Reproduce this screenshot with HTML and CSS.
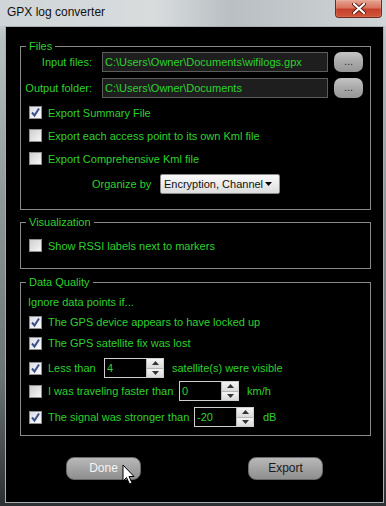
FILE: index.html
```html
<!DOCTYPE html>
<html lang="en">
<head>
    <meta charset="UTF-8">
    <title>GPX log converter</title>
    <link rel="stylesheet" href="styles.css">
</head>
<body>

<div class="window">

    <div class="titlebar">
        <span class="title">GPX log converter</span>
        <span class="close">
            <svg width="14" height="11" viewBox="0 0 14 11">
                <path d="M2 1 L12 10 M12 1 L2 10" stroke="#5a1a10" stroke-width="4" stroke-linecap="round"/>
                <path d="M2 1 L12 10 M12 1 L2 10" stroke="#ffffff" stroke-width="2.2" stroke-linecap="round"/>
            </svg>
        </span>
    </div>

    <div class="client">

        <!-- Files -->
        <div class="group group-files">
            <span class="group-title">Files</span>

            <div class="path-row path-row-first">
                <span class="path-label">Input files:</span>
                <div class="textbox">C:\Users\Owner\Documents\wifilogs.gpx</div>
                <span class="browse">...</span>
            </div>
            <div class="path-row path-row-second">
                <span class="path-label">Output folder:</span>
                <div class="textbox">C:\Users\Owner\Documents</div>
                <span class="browse">...</span>
            </div>

            <div class="check-row check-row-first">
                <span class="box checked"><svg width="11" height="11" viewBox="0 0 11 11"><path d="M2 5.5 L4.5 8.5 L9 1.5" fill="none" stroke="#3d4f86" stroke-width="2"/></svg></span>
                <span>Export Summary File</span>
            </div>
            <div class="check-row">
                <span class="box"></span>
                <span>Export each access point to its own Kml file</span>
            </div>
            <div class="check-row">
                <span class="box"></span>
                <span>Export Comprehensive Kml file</span>
            </div>

            <div class="organize-row">
                <span class="organize-label">Organize by</span>
                <div class="combo">
                    <span class="combo-text">Encryption, Channel</span>
                    <svg width="7" height="4" viewBox="0 0 7 4"><path d="M0 0 L7 0 L3.5 4 Z" fill="#000"/></svg>
                </div>
            </div>
        </div>

        <!-- Visualization -->
        <div class="group group-vis">
            <span class="group-title">Visualization</span>
            <div class="check-row check-row-vis">
                <span class="box"></span>
                <span>Show RSSI labels next to markers</span>
            </div>
        </div>

        <!-- Data Quality -->
        <div class="group group-dq">
            <span class="group-title">Data Quality</span>

            <div class="dq-row dq-ignore">Ignore data points if...</div>

            <div class="dq-row dq-r1">
                <span class="box checked"><svg width="11" height="11" viewBox="0 0 11 11"><path d="M2 5.5 L4.5 8.5 L9 1.5" fill="none" stroke="#3d4f86" stroke-width="2"/></svg></span>
                <span>The GPS device appears to have locked up</span>
            </div>
            <div class="dq-row dq-r2">
                <span class="box checked"><svg width="11" height="11" viewBox="0 0 11 11"><path d="M2 5.5 L4.5 8.5 L9 1.5" fill="none" stroke="#3d4f86" stroke-width="2"/></svg></span>
                <span>The GPS satellite fix was lost</span>
            </div>
            <div class="dq-row dq-r3">
                <span class="box checked"><svg width="11" height="11" viewBox="0 0 11 11"><path d="M2 5.5 L4.5 8.5 L9 1.5" fill="none" stroke="#3d4f86" stroke-width="2"/></svg></span>
                <span class="spin-label lbl-less">Less than</span>
                <div class="spinbox">
                    <span class="spin-value">4</span>
                    <span class="spin-btns">
                        <span class="spin-up"><svg width="7" height="4" viewBox="0 0 7 4"><path d="M0 4 L7 4 L3.5 0 Z" fill="#333"/></svg></span>
                        <span class="spin-down"><svg width="7" height="4" viewBox="0 0 7 4"><path d="M0 0 L7 0 L3.5 4 Z" fill="#333"/></svg></span>
                    </span>
                </div>
                <span class="unit">satellite(s) were visible</span>
            </div>
            <div class="dq-row dq-r4">
                <span class="box"></span>
                <span class="spin-label lbl-fast">I was traveling faster than</span>
                <div class="spinbox">
                    <span class="spin-value">0</span>
                    <span class="spin-btns">
                        <span class="spin-up"><svg width="7" height="4" viewBox="0 0 7 4"><path d="M0 4 L7 4 L3.5 0 Z" fill="#333"/></svg></span>
                        <span class="spin-down"><svg width="7" height="4" viewBox="0 0 7 4"><path d="M0 0 L7 0 L3.5 4 Z" fill="#333"/></svg></span>
                    </span>
                </div>
                <span class="unit">km/h</span>
            </div>
            <div class="dq-row dq-r5">
                <span class="box checked"><svg width="11" height="11" viewBox="0 0 11 11"><path d="M2 5.5 L4.5 8.5 L9 1.5" fill="none" stroke="#3d4f86" stroke-width="2"/></svg></span>
                <span class="spin-label lbl-signal">The signal was stronger than</span>
                <div class="spinbox">
                    <span class="spin-value">-20</span>
                    <span class="spin-btns">
                        <span class="spin-up"><svg width="7" height="4" viewBox="0 0 7 4"><path d="M0 4 L7 4 L3.5 0 Z" fill="#333"/></svg></span>
                        <span class="spin-down"><svg width="7" height="4" viewBox="0 0 7 4"><path d="M0 0 L7 0 L3.5 4 Z" fill="#333"/></svg></span>
                    </span>
                </div>
                <span class="unit unit-db">dB</span>
            </div>
        </div>

        <div class="button-row">
            <span class="btn btn-done">Done
                <svg class="cursor" width="14" height="22" viewBox="0 0 14 22">
                    <path d="M1 1 L1 17 L4.5 13.5 L7.5 20 L10 19 L7 12.5 L12 12.5 Z" fill="#fff" stroke="#000" stroke-width="1"/>
                </svg>
            </span>
            <span class="btn btn-export">Export</span>
        </div>

    </div>
</div>

</body>
</html>
```

FILE: styles.css
```css
    html, body {
        margin: 0;
        padding: 0;
        background: #2a2c2d;
    }

    .window {
        width: 386px;
        height: 506px;
        overflow: hidden;
        font-family: "Liberation Sans", Arial, sans-serif;
        font-size: 11px;
        background: linear-gradient(180deg, #d9dee0 0px, #b9c0c3 40px, #8e979a 200px, #6a7274 380px, #2e3133 500px);
    }

    /* title bar */
    .titlebar {
        display: flex;
        align-items: flex-start;
        height: 26px;
        background: linear-gradient(90deg, #cfd5d8 0%, #d8dcdd 40%, #b9bfc2 60%, #d0d5d7 100%);
    }
    .title {
        margin: 5px 0 0 7px;
        font-size: 12px;
        color: #111;
        flex: 1;
    }
    .close {
        display: flex;
        align-items: center;
        justify-content: center;
        width: 45px;
        height: 17px;
        margin-right: 4px;
        border: 1px solid #6e2a20;
        border-top: none;
        border-radius: 0 0 4px 4px;
        background: linear-gradient(180deg, #e7a593 0%, #d9735e 45%, #c5402b 55%, #d0553a 100%);
        box-shadow: inset 0 0 1px #fff;
    }

    /* black client area */
    .client {
        box-sizing: border-box;
        width: 379px;
        height: 477px;
        margin-left: 5px;
        border: 1px solid #a9aeb0;
        background: #000;
        color: #2fd12f;
        padding-top: 19px;
    }

    .group {
        position: relative;
        box-sizing: border-box;
        width: 351px;
        margin-left: 14px;
        border: 1px solid #8a8a8a;
    }
    .group-title {
        position: absolute;
        top: -8px;
        left: 5px;
        padding: 0 3px;
        background: #000;
        line-height: 14px;
    }
    .group-files {
        padding-bottom: 15px;
    }
    .group-vis {
        margin-top: 12px;
        padding-bottom: 11px;
    }
    .group-dq {
        margin-top: 13px;
        padding-bottom: 8px;
    }

    /* path rows */
    .path-row {
        display: flex;
        align-items: center;
        height: 20px;
    }
    .path-row-first {
        margin-top: 5px;
    }
    .path-row-second {
        margin-top: 6px;
    }
    .path-label {
        width: 71px;
        text-align: right;
        margin-right: 10px;
    }
    .textbox {
        box-sizing: border-box;
        width: 226px;
        height: 20px;
        padding: 3px 0 0 2px;
        border: 1px solid #5c5c5c;
        background: #1e1e1e;
        white-space: nowrap;
        overflow: hidden;
    }
    .browse {
        box-sizing: border-box;
        width: 29px;
        height: 20px;
        margin-left: 6px;
        border-radius: 7px;
        background: linear-gradient(180deg, #c4c4c4 0%, #a9a9a9 50%, #979797 100%);
        color: #333;
        text-align: center;
        line-height: 18px;
    }

    /* check rows */
    .check-row {
        display: flex;
        align-items: center;
        height: 23px;
        padding-left: 8px;
    }
    .check-row-first {
        margin-top: 3px;
    }
    .check-row-vis {
        margin-top: 11px;
    }

    .box {
        box-sizing: border-box;
        display: inline-flex;
        align-items: center;
        justify-content: center;
        width: 13px;
        height: 13px;
        margin-right: 6px;
        flex: none;
        border: 1px solid #8f8f8f;
        background: linear-gradient(135deg, #cfcfcf 0%, #e6e6e6 60%, #f7f7f7 100%);
    }
    .box.checked {
        background: linear-gradient(135deg, #d9dde6 0%, #eef0f4 60%, #fbfbfb 100%);
    }

    .organize-row {
        display: flex;
        align-items: center;
        height: 20px;
        margin-top: 4px;
        padding-left: 71px;
    }
    .organize-label {
        width: 68px;
    }
    .combo {
        box-sizing: border-box;
        display: flex;
        align-items: center;
        justify-content: space-between;
        width: 120px;
        height: 20px;
        padding: 0 7px 0 3px;
        border: 1px solid #8a8a8a;
        border-radius: 2px;
        background: linear-gradient(180deg, #fafafa 0%, #ececec 50%, #dcdcdc 100%);
        color: #111;
        font-size: 11px;
    }
    .combo-text {
        white-space: nowrap;
    }

    /* data quality rows */
    .dq-row {
        display: flex;
        align-items: center;
        height: 20px;
        padding-left: 8px;
    }
    .dq-ignore {
        margin-top: 9px;
        padding-left: 7px;
    }
    .dq-r2 {
        margin-top: 1px;
    }
    .dq-r3 {
        margin-top: 5px;
    }
    .dq-r4 {
        margin-top: 3px;
    }
    .dq-r5 {
        margin-top: 6px;
    }

    .lbl-less   { width: 56px; }
    .lbl-fast   { width: 131px; }
    .lbl-signal { width: 146px; }

    .spinbox {
        box-sizing: border-box;
        display: flex;
        width: 60px;
        height: 20px;
        border: 1px solid #cfcfcf;
        background: #000;
    }
    .spin-value {
        flex: 1;
        padding: 3px 0 0 2px;
    }
    .spin-btns {
        display: flex;
        flex-direction: column;
        width: 16px;
        border-left: 1px solid #bcbcbc;
    }
    .spin-up, .spin-down {
        flex: 1;
        display: flex;
        align-items: center;
        justify-content: center;
        background: linear-gradient(180deg, #f4f4f4 0%, #dadada 100%);
    }
    .spin-up {
        border-bottom: 1px solid #b5b5b5;
    }
    .unit {
        margin-left: 8px;
    }
    .unit-db {
        margin-left: 9px;
    }

    /* bottom buttons */
    .button-row {
        display: flex;
        margin-top: 21px;
        padding-left: 60px;
    }
    .btn {
        position: relative;
        box-sizing: border-box;
        width: 75px;
        height: 23px;
        border-radius: 8px;
        border: 1px solid #6a6a6a;
        background: linear-gradient(180deg, #b9b9b9 0%, #a3a3a3 50%, #8f8f8f 100%);
        text-align: center;
        line-height: 21px;
        font-size: 12px;
    }
    .btn-done {
        color: #f4f4f4;
    }
    .btn-export {
        margin-left: 107px;
        color: #1a1a1a;
    }
    .cursor {
        position: absolute;
        left: 55px;
        top: 6px;
    }
```
